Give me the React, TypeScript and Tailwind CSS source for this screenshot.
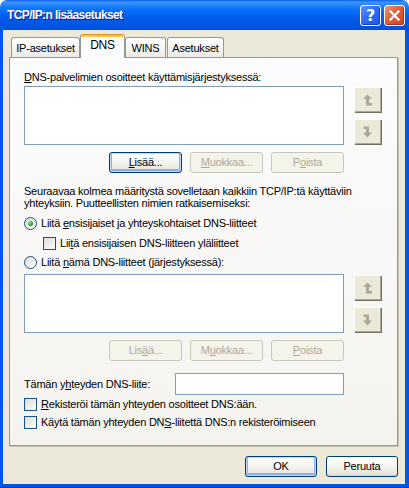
import React from "react";

const U = ({ children }: { children: React.ReactNode }) => (
  <span className="underline underline-offset-[1px] decoration-[1px]">{children}</span>
);

function XpButton({
  children,
  w,
  disabled,
  focused,
}: {
  children: React.ReactNode;
  w: string;
  disabled?: boolean;
  focused?: boolean;
}) {
  if (disabled) {
    return (
      <div
        className={`${w} h-[21px] rounded-[3px] border border-[#C9C7BA] bg-[#F5F4EA] text-[#ACA899] flex items-center justify-center`}
      >
        {children}
      </div>
    );
  }
  return (
    <div
      className={`${w} h-[21px] rounded-[3px] border border-[#003C74] bg-[linear-gradient(to_bottom,#FFFFFF_0%,#F4F4F0_50%,#E6E5DE_90%,#D6D0C5_100%)] flex items-center justify-center ${
        focused ? "shadow-[inset_0_0_0_1px_#C3D7F9,inset_0_-1px_0_2px_#8FAEEB]" : ""
      }`}
    >
      {children}
    </div>
  );
}

function ArrowBtn({ dir }: { dir: "up" | "down" }) {
  return (
    <div className="w-[27px] h-[25px] bg-[#ECE9D8] border-t border-l border-[#FFFFFF] shadow-[1px_1px_0_#716F64,inset_-1px_-1px_0_#ACA899] flex items-center justify-center">
      <svg width="10" height="12" viewBox="0 0 10 12">
        {dir === "up" ? (
          <path d="M4.5 0.5 L9 5 L6 5 L6 9 L9 9 L9 11.5 L3 11.5 L3 5 L0 5 Z" fill="#ACA899" />
        ) : (
          <path d="M0.5 0.5 L6 0.5 L6 6.5 L9 6.5 L4.5 11.5 L0 6.5 L3 6.5 L3 3 L0.5 3 Z" fill="#ACA899" />
        )}
      </svg>
    </div>
  );
}

function Radio({ checked }: { checked?: boolean }) {
  return (
    <div className="w-[13px] h-[13px] rounded-full border border-[#1C5180] bg-[linear-gradient(135deg,#DCDCD7_0%,#F2F2EE_60%,#FFFFFF_100%)] flex items-center justify-center shrink-0">
      {checked && (
        <div className="w-[5px] h-[5px] rounded-full bg-[radial-gradient(circle_at_35%_35%,#8FE88F_0%,#2CB22C_50%,#177817_100%)]" />
      )}
    </div>
  );
}

function Check() {
  return (
    <div className="w-[13px] h-[13px] border border-[#1C5180] bg-[linear-gradient(135deg,#DCDCD7_0%,#F0F0EC_60%,#FFFFFF_100%)] shrink-0" />
  );
}

function ListRow({ h }: { h: string }) {
  return (
    <div className="flex">
      <div className={`w-[320px] ${h} border border-[#7F9DB9] bg-white`} />
      <div className="ml-[10px] flex flex-col gap-[7px] pt-[1px]">
        <ArrowBtn dir="up" />
        <ArrowBtn dir="down" />
      </div>
    </div>
  );
}

export default function App() {
  return (
    <div className="w-[409px] h-[488px] flex flex-col bg-white font-['Liberation_Sans',Arial,sans-serif] text-[11px] leading-[13px] tracking-[-0.22px] text-black overflow-hidden">
      {/* Title bar */}
      <div className="h-[30px] shrink-0 rounded-t-[7px] bg-[linear-gradient(to_bottom,#0A5CEC_0%,#3C95FF_7%,#2B8BFF_14%,#1279FB_25%,#0569F5_40%,#0460EC_55%,#0158E6_72%,#0054E3_88%,#0250DB_100%)] flex items-center pl-[7px] pr-[4px]">
        <div className="flex-1 text-white font-bold text-[12px] font-['Liberation_Sans',Arial,sans-serif] [text-shadow:1px_1px_0_#0A1E8C] tracking-[-0.6px] mt-[1px]">
          TCP/IP:n lisäasetukset
        </div>
        <div className="flex gap-[3px] mt-[1px]">
          <div className="w-[21px] h-[21px] rounded-[3px] border border-white bg-[linear-gradient(135deg,#5B94FF_0%,#2F6EF3_45%,#1C58E2_100%)] shadow-[inset_-1px_-1px_1px_#1440B8] flex items-center justify-center text-white font-bold text-[16px] leading-none font-['DejaVu_Sans',sans-serif]">
            ?
          </div>
          <div className="w-[21px] h-[21px] rounded-[3px] border border-white bg-[linear-gradient(135deg,#F09A7C_0%,#E2623E_40%,#CC4620_100%)] shadow-[inset_-1px_-1px_1px_#A8301A] flex items-center justify-center">
            <svg width="11" height="11" viewBox="0 0 11 11">
              <path d="M1.5 1.5 L9.5 9.5 M9.5 1.5 L1.5 9.5" stroke="white" strokeWidth="2.2" strokeLinecap="square" />
            </svg>
          </div>
        </div>
      </div>

      {/* Frame */}
      <div className="flex-1 flex bg-[#0055E6] pl-[3px] pr-[4px] pb-[3px] border-b border-[#0034B0]">
        <div className="flex-1 bg-[#ECE9D8] flex flex-col pl-[6px]">
          {/* Tabs */}
          <div className="mt-[4px] h-[23px] flex items-end pl-[2px] relative z-10">
            <div className="w-[69px] h-[20px] rounded-t-[3px] border border-b-0 border-[#919B9C] bg-[linear-gradient(to_bottom,#FFFFFF,#ECEBE6)] flex items-center justify-center pt-[1px]">
              IP-asetukset
            </div>
            <div className="w-[45px] h-[24px] -mb-[1px] rounded-t-[3px] border-x border-[#919B9C] bg-[#FCFCFE] flex flex-col overflow-hidden">
              <div className="h-[1px] bg-[#E68B2C]" />
              <div className="h-[2px] bg-[#FFC73C]" />
              <div className="flex-1 flex items-center justify-center pb-[4px] text-[12px]">DNS</div>
            </div>
            <div className="w-[41px] h-[20px] rounded-t-[3px] border border-b-0 border-[#919B9C] bg-[linear-gradient(to_bottom,#FFFFFF,#ECEBE6)] flex items-center justify-center pt-[1px]">
              WINS
            </div>
            <div className="w-[57px] ml-[1px] h-[20px] rounded-t-[3px] border border-b-0 border-[#919B9C] bg-[linear-gradient(to_bottom,#FFFFFF,#ECEBE6)] flex items-center justify-center pt-[1px]">
              Asetukset
            </div>
          </div>

          {/* Panel */}
          <div className="w-[389px] h-[389px] shrink-0 border border-[#919B9C] bg-[linear-gradient(to_bottom,#FCFCFE,#F4F3EE)] shadow-[1px_1px_0_#C6C3B4] flex flex-col pl-[14px]">
            <div className="mt-[13px] h-[13px]">
              <U>D</U>NS-palvelimien osoitteet käyttämisjärjestyksessä:
            </div>
            <div className="mt-[2px]">
              <ListRow h="h-[59px]" />
            </div>
            <div className="mt-[7px] w-[320px] flex justify-end gap-[8px]">
              <XpButton w="w-[73px]" focused>
                <span><U>L</U>isää...</span>
              </XpButton>
              <XpButton w="w-[73px]" disabled>
                <span><U>M</U>uokkaa...</span>
              </XpButton>
              <XpButton w="w-[73px]" disabled>
                <span>P<U>o</U>ista</span>
              </XpButton>
            </div>
            <div className="mt-[12px] leading-[12px]">
              Seuraavaa kolmea määritystä sovelletaan kaikkiin TCP/IP:tä käyttäviin
              <br />
              yhteyksiin. Puutteellisten nimien ratkaisemiseksi:
            </div>
            <div className="mt-[6px] h-[16px] flex items-center gap-[4px]">
              <Radio checked />
              <span>Liitä <U>e</U>nsisijaiset ja yhteyskohtaiset DNS-liitteet</span>
            </div>
            <div className="mt-[4px] h-[16px] flex items-center gap-[4px] ml-[19px]">
              <Check />
              <span>Lii<U>t</U>ä ensisijaisen DNS-liitteen yläliitteet</span>
            </div>
            <div className="mt-[3px] h-[16px] flex items-center gap-[4px]">
              <Radio />
              <span>Liitä <U>n</U>ämä DNS-liitteet (järjestyksessä):</span>
            </div>
            <div className="mt-[4px]">
              <ListRow h="h-[59px]" />
            </div>
            <div className="mt-[7px] w-[320px] flex justify-end gap-[8px]">
              <XpButton w="w-[73px]" disabled>
                <span>Lis<U>ä</U>ä...</span>
              </XpButton>
              <XpButton w="w-[73px]" disabled>
                <span>M<U>u</U>okkaa...</span>
              </XpButton>
              <XpButton w="w-[73px]" disabled>
                <span><U>P</U>oista</span>
              </XpButton>
            </div>
            <div className="mt-[12px] w-[320px] flex items-center">
              <span className="flex-1">Tämän y<U>h</U>teyden DNS-liite:</span>
              <div className="w-[169px] h-[22px] border border-[#7F9DB9] bg-white" />
            </div>
            <div className="mt-[1px] h-[16px] flex items-center gap-[4px]">
              <Check />
              <span><U>R</U>ekisteröi tämän yhteyden osoitteet DNS:ään.</span>
            </div>
            <div className="mt-[2px] h-[16px] flex items-center gap-[4px]">
              <Check />
              <span>Käytä tämän yhteyden DN<U>S</U>-liitettä DNS:n rekisteröimiseen</span>
            </div>
          </div>

          {/* Bottom buttons */}
          <div className="mt-[10px] w-[389px] flex justify-end gap-[9px]">
            <XpButton w="w-[72px]" focused>OK</XpButton>
            <XpButton w="w-[72px]">Peruuta</XpButton>
          </div>
        </div>
      </div>
    </div>
  );
}
